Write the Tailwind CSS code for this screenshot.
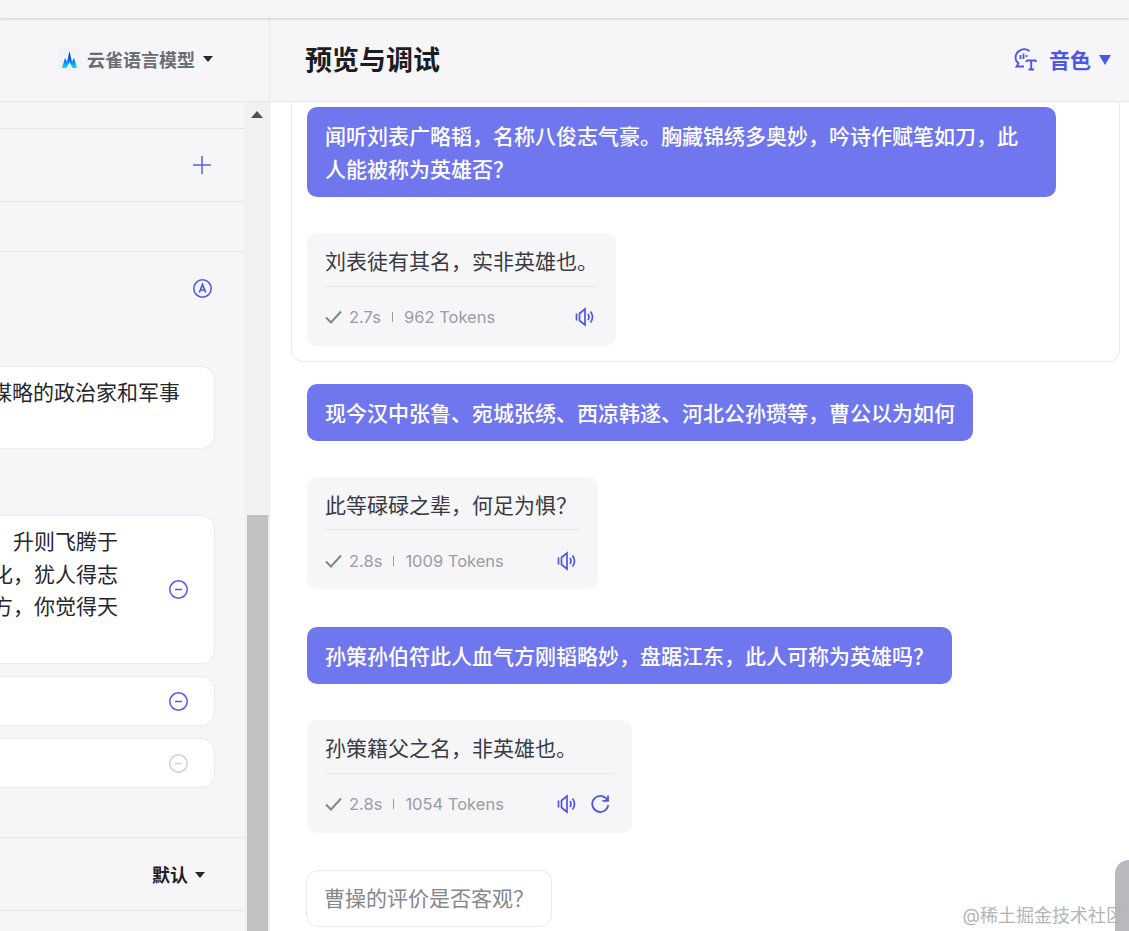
<!doctype html>
<html lang="zh"><head><meta charset="utf-8"><script src="https://cdn.jsdelivr.net/npm/@tailwindcss/browser@4"></script></head>
<body class="m-0 overflow-hidden bg-white font-['Inter','Noto_Sans_CJK_SC',sans-serif] text-[#26272d]">
<div class="relative flex h-[931px] w-[1129px] flex-col overflow-hidden">
  <div class="h-[18px] shrink-0 bg-[#f6f6f9] shadow-[0_1px_3px_rgba(0,0,0,0.18)] relative z-10"></div>
  <div class="flex h-[913px]">
    <!-- left -->
    <div class="flex w-[270px] shrink-0 flex-col border-r border-[#e9e9ee] bg-[#f6f6f9]">
      <div class="flex h-[84px] shrink-0 items-center justify-end border-b border-[#e5e5ea] pr-[56px]">
        <span class="mr-[6px] flex h-[23px] w-[23px] items-center justify-center rounded-[5px] bg-[#f1f2f6]">
          <svg width="15" height="17" viewBox="0 0 15 17"><defs><linearGradient id="lg" x1="0" y1="0" x2="0" y2="1"><stop offset="0" stop-color="#0a2fd8"/><stop offset="0.55" stop-color="#0a6cf0"/><stop offset="1" stop-color="#00e6ff"/></linearGradient></defs><path d="M0 17 L3 7 L5 11 L7.5 0 L10 11 L12 7 L15 17 L10.5 17 L7.5 11 L4.5 17Z" fill="url(#lg)"/></svg>
        </span>
        <span class="pt-[3px] text-[18px] leading-[24px] font-bold text-[#6b6d74]">云雀语言模型</span>
        <svg class="ml-[8px] -mt-[2px]" width="10" height="6" viewBox="0 0 10 6"><path d="M0 0H10L5 6Z" fill="#26272d"/></svg>
      </div>
      <div class="flex min-h-0 flex-1">
        <div class="flex w-[245px] shrink-0 flex-col overflow-hidden">
          <div class="h-[27px] shrink-0 border-b border-[#e5e5ea]"></div>
          <div class="flex h-[73px] shrink-0 items-center justify-end border-b border-[#e5e5ea] pr-[34px]">
            <svg width="18" height="18" viewBox="0 0 18 18" fill="none" stroke="#5a5fea" stroke-width="1.5"><path d="M9 0V18M0 9H18"/></svg>
          </div>
          <div class="h-[50px] shrink-0 border-b border-[#e5e5ea]"></div>
          <div class="flex h-[586px] shrink-0 flex-col border-b border-[#e5e5ea]">
            <div class="flex h-[114px] shrink-0 items-start justify-end pt-[27px] pr-[33px]">
              <svg width="19" height="19" viewBox="0 0 19 19" fill="none" stroke="#4f55e8"><circle cx="9.5" cy="9.5" r="8.7" stroke-width="1.5"/><path d="M6.3 13.5L9.5 5.5L12.7 13.5M7.4 11H11.6" stroke-width="1.7"/></svg>
            </div>
            <div class="mr-[30px] flex h-[83px] shrink-0 flex-col items-end overflow-hidden rounded-r-[14px] border border-l-0 border-[#ebebef] bg-white pt-[10px] pr-[34px]">
              <p class="text-[21px] leading-[32.5px] whitespace-nowrap">谋略的政治家和军事</p>
            </div>
            <div class="h-[66px] shrink-0"></div>
            <div class="mr-[30px] flex h-[149px] shrink-0 items-center rounded-r-[14px] border border-l-0 border-[#ebebef] bg-white pr-[26px]">
              <div class="flex min-w-0 flex-1 flex-col items-end self-start overflow-hidden pt-[10px] pr-[51px] text-[21px] leading-[32.5px] whitespace-nowrap">
                <p>能升能隐　升则飞腾于</p><p>龙乘时变化，犹人得志</p><p>玄德久历四方，你觉得天</p>
              </div>
              <svg width="19" height="19" viewBox="0 0 19 19" fill="none" stroke="#4f55e8" stroke-width="1.5"><circle cx="9.5" cy="9.5" r="8.7"/><path d="M6 9.5H13"/></svg>
            </div>
            <div class="mt-[12px] mr-[30px] flex h-[50px] shrink-0 items-center justify-end rounded-r-[14px] border border-l-0 border-[#ebebef] bg-white pr-[26px]">
              <svg width="19" height="19" viewBox="0 0 19 19" fill="none" stroke="#4f55e8" stroke-width="1.5"><circle cx="9.5" cy="9.5" r="8.7"/><path d="M6 9.5H13"/></svg>
            </div>
            <div class="mt-[12px] mr-[30px] flex h-[50px] shrink-0 items-center justify-end rounded-r-[14px] border border-l-0 border-[#ebebef] bg-white pr-[26px]">
              <svg width="19" height="19" viewBox="0 0 19 19" fill="none" stroke="#d0d0d4" stroke-width="1.5"><circle cx="9.5" cy="9.5" r="8.7"/><path d="M6 9.5H13"/></svg>
            </div>
          </div>
          <div class="flex h-[73px] shrink-0 items-center justify-end border-b border-[#e5e5ea] pr-[40px]">
            <span class="pt-[3px] text-[18px] leading-[24px] font-bold text-[#1f2026]">默认</span>
            <svg class="ml-[7px] mt-[2px]" width="10" height="6" viewBox="0 0 10 6"><path d="M0 0H10L5 6Z" fill="#26272d"/></svg>
          </div>
        </div>
        <div class="relative w-[24px] shrink-0 bg-[#f1f1f1]">
          <svg class="absolute top-[9px] left-[6px]" width="12" height="7" viewBox="0 0 12 7"><path d="M6 0L12 7H0Z" fill="#505050"/></svg>
          <div class="absolute top-[413px] right-[1px] bottom-0 left-[2px] bg-[#c1c1c1]"></div>
        </div>
      </div>
    </div>
    <!-- right -->
    <div class="flex min-w-0 flex-1 flex-col">
      <div class="flex h-[84px] shrink-0 items-center border-b border-[#e5e5ea] bg-[#f6f6f9] pr-[18px] pl-[35px]">
        <h1 class="flex-1 pt-[2px] text-[27px] leading-[36px] font-bold text-[#1c1d23]">预览与调试</h1>
        <svg width="23" height="23" viewBox="0 0 23 23" fill="none" stroke="#4f55e8" stroke-width="1.8"><path d="M15.5 3A8.8 8.8 0 0 0 1.5 9.5C1.5 12 2.5 14 4.5 15.5L2.5 18.5H10"/><path d="M6.5 7V11M9.5 5.5V11M12.5 7V9"/><path d="M12.5 12.5H22M12.5 12.5V14M22 12.5V14M17.2 12.5V21.5M14.5 21.5H20" stroke-width="1.9"/></svg>
        <span class="ml-[12px] pt-[2px] text-[21px] leading-[28px] font-bold text-[#4f55e8]">音色</span>
        <svg class="ml-[8px]" width="12" height="10" viewBox="0 0 12 10"><path d="M0 0H12L6 10Z" fill="#4f55e8"/></svg>
      </div>
      <div class="relative min-h-0 flex-1 overflow-hidden bg-white pl-[37px]">
        <div class="absolute -top-[20px] left-[21px] h-[280px] w-[829px] rounded-[12px] border border-[#e9e9ee]"></div>
        <div class="relative flex flex-col items-start">
          <div class="mt-[5px] w-[749px] rounded-[10px] bg-[#6f76ee] px-[18px] pt-[13px] pb-[11px] text-[21px] leading-[33px] font-medium text-white">闻听刘表广略韬，名称八俊志气豪。胸藏锦绣多奥妙，吟诗作赋笔如刀，此人能被称为英雄否？</div>
          <div class="mt-[36px] rounded-[10px] bg-[#f6f6f9] px-[18px] pt-[12px] pb-[17px]">
            <p class="border-b border-[#e5e5ea] pb-[8px] text-[21px] leading-[33px] text-[#3a3b42]">刘表徒有其名，实非英雄也。</p>
            <div class="mt-[18px] flex h-[24px] items-center text-[16.5px] text-[#9a9ca3]">
              <svg width="17" height="14" viewBox="0 0 17 14" fill="none" stroke="#83858c" stroke-width="2"><path d="M1 7.5L6 12.5L16 1.5"/></svg>
              <span class="ml-[7px]">2.7s</span><span class="mx-[11px] h-[10px] w-px bg-[#9a9ca3]"></span><span>962 Tokens</span>
              <span class="flex-1"></span>
              <svg class="mr-[3px]" width="20" height="20" viewBox="0 0 20 20" fill="none" stroke="#4f55e8" stroke-width="1.7"><path d="M1.5 6.5V13.5M4.5 6.5V13.5L10 18V2L4.5 6.5Z"/><path d="M13 7Q15 10 13 13M15.5 4.5Q19.5 10 15.5 15.5"/></svg>
            </div>
          </div>
          <div class="mt-[38px] rounded-[10px] bg-[#6f76ee] px-[18px] pt-[13px] pb-[11px] text-[21px] leading-[33px] font-medium text-white">现今汉中张鲁、宛城张绣、西凉韩遂、河北公孙瓒等，曹公以为如何</div>
          <div class="mt-[36px] w-[291px] rounded-[10px] bg-[#f6f6f9] px-[18px] pt-[12px] pb-[16px]">
            <p class="border-b border-[#e5e5ea] pb-[7px] text-[21px] leading-[33px] text-[#3a3b42]">此等碌碌之辈，何足为惧？</p>
            <div class="mt-[19px] flex h-[24px] items-center text-[16.5px] text-[#9a9ca3]">
              <svg width="17" height="14" viewBox="0 0 17 14" fill="none" stroke="#83858c" stroke-width="2"><path d="M1 7.5L6 12.5L16 1.5"/></svg>
              <span class="ml-[7px]">2.8s</span><span class="mx-[11px] h-[10px] w-px bg-[#9a9ca3]"></span><span>1009 Tokens</span>
              <span class="flex-1"></span>
              <svg class="mr-[3px]" width="20" height="20" viewBox="0 0 20 20" fill="none" stroke="#4f55e8" stroke-width="1.7"><path d="M1.5 6.5V13.5M4.5 6.5V13.5L10 18V2L4.5 6.5Z"/><path d="M13 7Q15 10 13 13M15.5 4.5Q19.5 10 15.5 15.5"/></svg>
            </div>
          </div>
          <div class="mt-[38px] rounded-[10px] bg-[#6f76ee] px-[18px] pt-[13px] pb-[11px] text-[21px] leading-[33px] font-medium text-white">孙策孙伯符此人血气方刚韬略妙，盘踞江东，此人可称为英雄吗？</div>
          <div class="mt-[36px] w-[325px] rounded-[10px] bg-[#f6f6f9] px-[18px] pt-[12px] pb-[17px]">
            <p class="border-b border-[#e5e5ea] pb-[8px] text-[21px] leading-[33px] text-[#3a3b42]">孙策籍父之名，非英雄也。</p>
            <div class="mt-[18px] flex h-[24px] items-center text-[16.5px] text-[#9a9ca3]">
              <svg width="17" height="14" viewBox="0 0 17 14" fill="none" stroke="#83858c" stroke-width="2"><path d="M1 7.5L6 12.5L16 1.5"/></svg>
              <span class="ml-[7px]">2.8s</span><span class="mx-[11px] h-[10px] w-px bg-[#9a9ca3]"></span><span>1054 Tokens</span>
              <span class="flex-1"></span>
              <svg width="20" height="20" viewBox="0 0 20 20" fill="none" stroke="#4f55e8" stroke-width="1.7"><path d="M1.5 6.5V13.5M4.5 6.5V13.5L10 18V2L4.5 6.5Z"/><path d="M13 7Q15 10 13 13M15.5 4.5Q19.5 10 15.5 15.5"/></svg>
              <svg class="mr-[4px] ml-[13px]" width="20" height="20" viewBox="0 0 20 20" fill="none" stroke="#4f55e8" stroke-width="1.8"><path d="M17.5 6.5A8 8 0 1 0 18.2 11"/><path d="M18 1.5V6.8H12.5"/></svg>
            </div>
          </div>
          <div class="mt-[37px] -ml-px flex h-[57px] w-[246px] items-center rounded-[12px] border-[1.5px] border-[#e9e9ed] pt-[1px] pl-[17px] text-[21px] text-[#85878e]">曹操的评价是否客观？</div>
        </div>
        <div class="absolute top-[758px] -right-[1px] h-[80px] w-[15px] rounded-tl-[14px] bg-[#b9b9bd]"></div>
        <div class="absolute top-[802px] right-[5px] text-[18px] leading-[24px] text-[#b4b4b7]">@稀土掘金技术社区</div>
      </div>
    </div>
  </div>
</div>
</body></html>
